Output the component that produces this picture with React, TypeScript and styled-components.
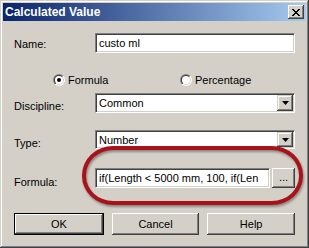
import React from "react";
import styled, { createGlobalStyle } from "styled-components";

const Global = createGlobalStyle`
  html, body { margin: 0; padding: 0; background: #d4d0c8; }
  body { font-family: "Liberation Sans", Arial, sans-serif; }
`;

const Window = styled.div`
  position: relative;
  width: 309px;
  height: 248px;
  box-sizing: border-box;
  padding: 3px;
  background: #d4d0c8;
  box-shadow: inset -1px -1px #404040, inset 1px 1px #d4d0c8,
    inset -2px -2px #808080, inset 2px 2px #ffffff;
  display: flex;
  flex-direction: column;
  font-family: "Liberation Sans", Arial, sans-serif;
  font-size: 11px;
  color: #000;
`;

const TitleBar = styled.div`
  height: 18px;
  display: flex;
  align-items: center;
  justify-content: space-between;
  padding: 0 2px 0 2px;
  background: linear-gradient(to right, #0a246a, #a6caf0);
`;

const Title = styled.span`
  color: #fff;
  font-weight: bold;
  font-size: 12px;
`;

const CloseButton = styled.div`
  width: 16px;
  height: 14px;
  box-sizing: border-box;
  background: #d4d0c8;
  box-shadow: inset -1px -1px #404040, inset 1px 1px #ffffff,
    inset -2px -2px #808080, inset 2px 2px #d4d0c8;
  display: flex;
  align-items: center;
  justify-content: center;
`;

const Content = styled.div`
  display: flex;
  flex-direction: column;
  padding: 0 11px;
`;

const Row = styled.div<{ $top: number; $h: number }>`
  display: grid;
  grid-template-columns: 81px 1fr;
  align-items: center;
  margin-top: ${(p) => p.$top}px;
  height: ${(p) => p.$h}px;
`;

const Label = styled.span<{ $shift?: number }>`
  margin-top: ${(p) => p.$shift ?? 0}px;
  white-space: nowrap;
`;

const Sunken = styled.div<{ $h: number; $grow?: boolean }>`
  height: ${(p) => p.$h}px;
  flex: ${(p) => (p.$grow ? 1 : "none")};
  box-sizing: border-box;
  border: 1px solid;
  border-color: #808080 #ffffff #ffffff #808080;
  box-shadow: inset 1px 1px #404040, inset -1px -1px #d4d0c8;
  background: #fff;
  display: flex;
  align-items: center;
  overflow: hidden;
`;

const FieldText = styled.span`
  padding-left: 3px;
  font-size: 11px;
  white-space: nowrap;
  flex: 1;
`;

const DropButton = styled.div`
  width: 16px;
  align-self: stretch;
  margin: 1px 1px 1px 0;
  background: #d4d0c8;
  box-shadow: inset -1px -1px #404040, inset 1px 1px #d4d0c8,
    inset -2px -2px #808080, inset 2px 2px #ffffff;
  display: flex;
  align-items: center;
  justify-content: center;
`;

const RadioRow = styled.div`
  display: flex;
  align-items: center;
  margin-top: 21px;
  height: 12px;
  padding-left: 39px;
`;

const RadioOption = styled.div<{ $w?: number }>`
  display: flex;
  align-items: center;
  gap: 3px;
  width: ${(p) => (p.$w ? `${p.$w}px` : "auto")};
`;

const RadioOuter = styled.span`
  width: 12px;
  height: 12px;
  border-radius: 50%;
  box-sizing: border-box;
  background: linear-gradient(135deg, #808080 50%, #ffffff 50%);
  display: flex;
  align-items: center;
  justify-content: center;
`;

const RadioInner = styled.span`
  width: 10px;
  height: 10px;
  border-radius: 50%;
  background: linear-gradient(135deg, #404040 50%, #d4d0c8 50%);
  display: flex;
  align-items: center;
  justify-content: center;
`;

const RadioFace = styled.span`
  width: 8px;
  height: 8px;
  border-radius: 50%;
  background: #fff;
  display: flex;
  align-items: center;
  justify-content: center;
`;

const RadioDot = styled.span`
  width: 4px;
  height: 4px;
  border-radius: 50%;
  background: #000;
`;

const FormulaField = styled.div`
  display: flex;
  gap: 2px;
`;

const Buttons = styled.div`
  display: flex;
  gap: 8px;
  margin-top: 25px;
`;

const Button = styled.div<{ $default?: boolean }>`
  flex: 1;
  height: 22px;
  box-sizing: border-box;
  display: flex;
  align-items: center;
  justify-content: center;
  background: #d4d0c8;
  font-size: 11px;
  ${(p) =>
    p.$default
      ? `border: 1px solid #000;
         box-shadow: inset -1px -1px #404040, inset 1px 1px #ffffff, inset -2px -2px #808080;`
      : `box-shadow: inset -1px -1px #404040, inset 1px 1px #ffffff, inset -2px -2px #808080, inset 2px 2px #d4d0c8;`}
`;

const SmallButton = styled.div`
  width: 23px;
  height: 20px;
  box-sizing: border-box;
  display: flex;
  align-items: center;
  justify-content: center;
  padding-bottom: 2px;
  background: #d4d0c8;
  box-shadow: inset -1px -1px #404040, inset 1px 1px #ffffff,
    inset -2px -2px #808080, inset 2px 2px #d4d0c8;
`;

const Highlight = styled.div`
  position: absolute;
  left: 82px;
  top: 146px;
  width: 221px;
  height: 59px;
  box-sizing: border-box;
  border: 4px solid #a9121b;
  border-radius: 31px / 29px;
  filter: drop-shadow(1px 2px 1px rgba(0, 0, 0, 0.35));
  pointer-events: none;
`;

const Arrow = () => (
  <svg width="7" height="4" viewBox="0 0 7 4">
    <path d="M0 0h7L3.5 4z" fill="#000" />
  </svg>
);

const CloseX = () => (
  <svg width="8" height="7" viewBox="0 0 8 7" shapeRendering="crispEdges">
    <path
      d="M0 0h2v1H0zM6 0h2v1H6zM1 1h2v1H1zM5 1h2v1H5zM2 2h4v1H2zM3 3h2v1H3zM2 4h4v1H2zM1 5h2v1H1zM5 5h2v1H5zM0 6h2v1H0zM6 6h2v1H6z"
      fill="#000"
    />
  </svg>
);

const Radio = ({ checked }: { checked?: boolean }) => (
  <RadioOuter>
    <RadioInner>
      <RadioFace>{checked && <RadioDot />}</RadioFace>
    </RadioInner>
  </RadioOuter>
);

export default function App() {
  return (
    <>
      <Global />
      <Window>
        <TitleBar>
          <Title>Calculated Value</Title>
          <CloseButton>
            <CloseX />
          </CloseButton>
        </TitleBar>
        <Content>
          <Row $top={12} $h={20}>
            <Label $shift={1}>Name:</Label>
            <Sunken $h={20}>
              <FieldText>custo ml</FieldText>
            </Sunken>
          </Row>
          <RadioRow>
            <RadioOption $w={127}>
              <Radio checked />
              <span>Formula</span>
            </RadioOption>
            <RadioOption>
              <Radio />
              <span>Percentage</span>
            </RadioOption>
          </RadioRow>
          <Row $top={7} $h={20}>
            <Label $shift={6}>Discipline:</Label>
            <Sunken $h={20}>
              <FieldText>Common</FieldText>
              <DropButton>
                <Arrow />
              </DropButton>
            </Sunken>
          </Row>
          <Row $top={17} $h={19}>
            <Label $shift={6}>Type:</Label>
            <Sunken $h={19}>
              <FieldText>Number</FieldText>
              <DropButton>
                <Arrow />
              </DropButton>
            </Sunken>
          </Row>
          <Row $top={19} $h={20}>
            <Label $shift={8}>Formula:</Label>
            <FormulaField>
              <Sunken $h={20} $grow>
                <FieldText>if(Length &lt; 5000 mm, 100, if(Len</FieldText>
              </Sunken>
              <SmallButton>...</SmallButton>
            </FormulaField>
          </Row>
          <Buttons>
            <Button $default>OK</Button>
            <Button>Cancel</Button>
            <Button>Help</Button>
          </Buttons>
        </Content>
        <Highlight />
      </Window>
    </>
  );
}
